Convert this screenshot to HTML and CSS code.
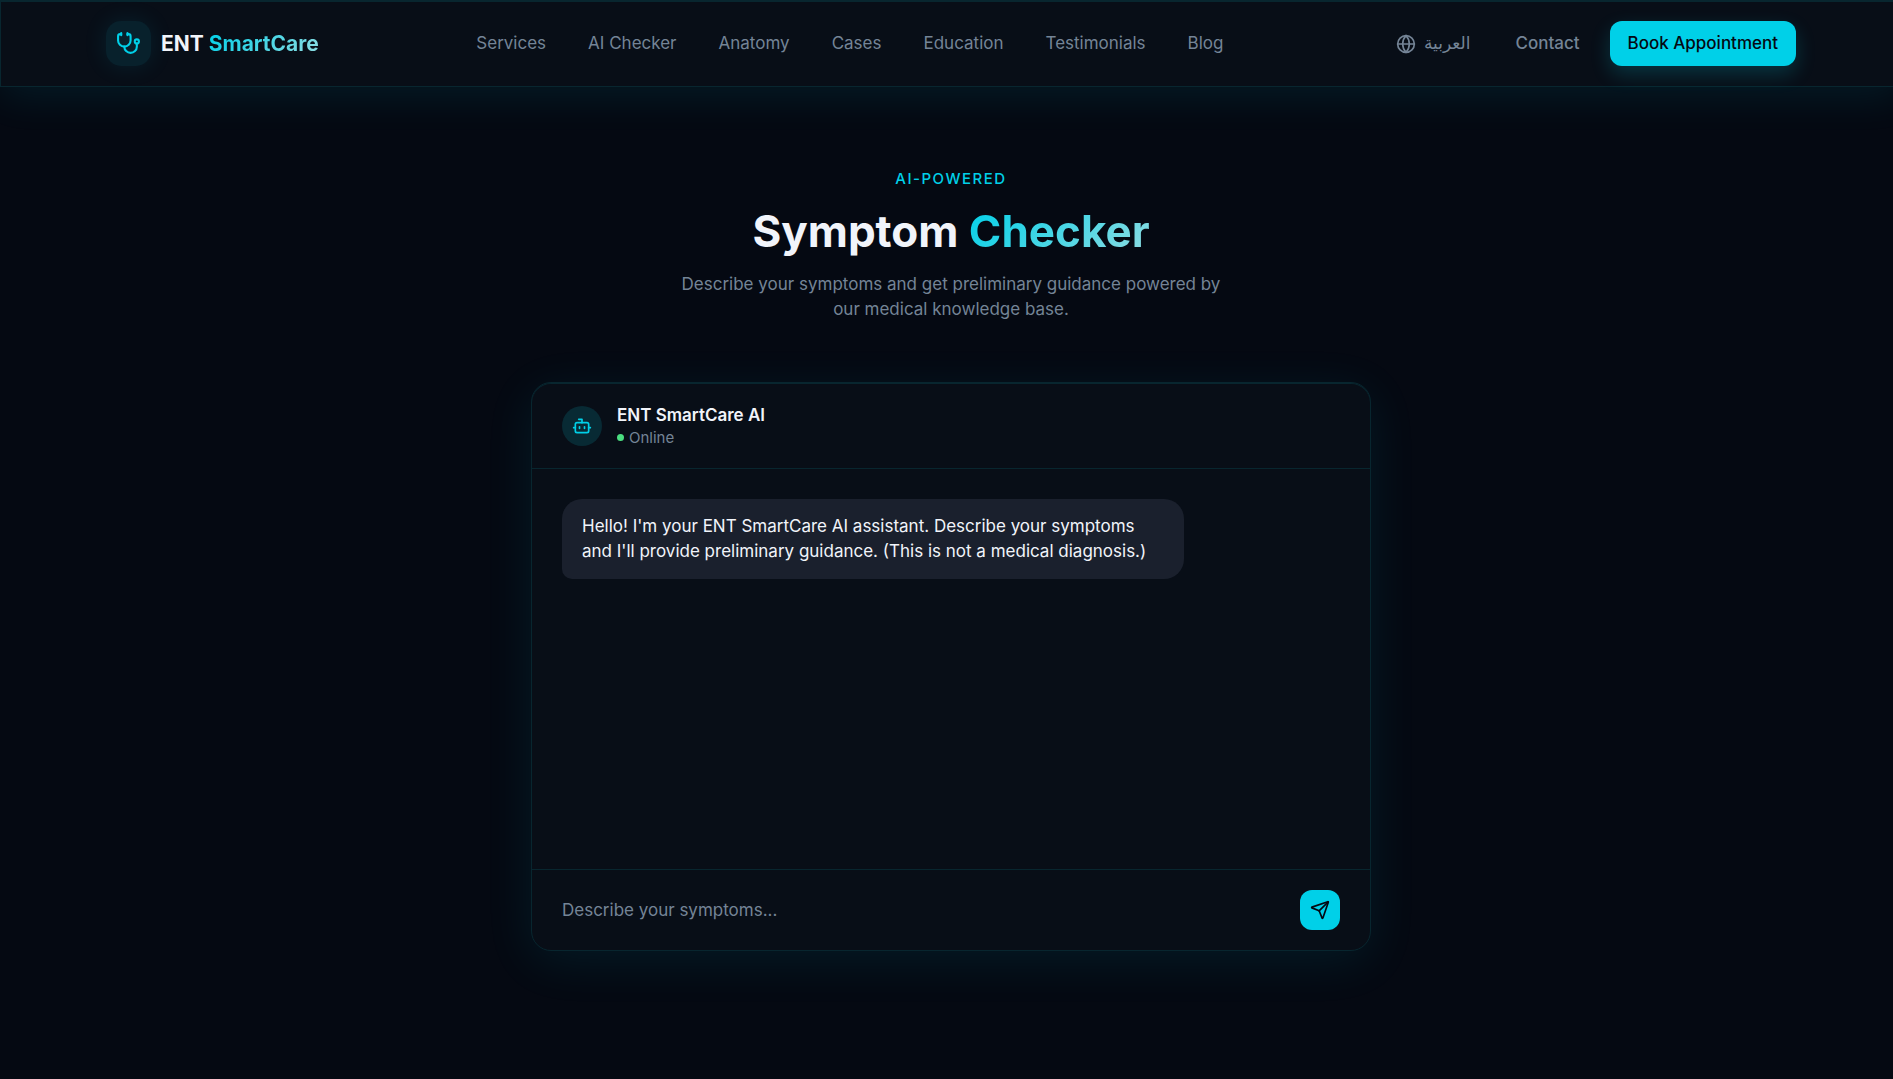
FILE: index.html
```html
<!DOCTYPE html>
<html lang="en">
<head>
<meta charset="utf-8">
<meta name="viewport" content="width=device-width, initial-scale=1">
<title>ENT SmartCare – Symptom Checker</title>
<link rel="stylesheet" href="styles.css">
</head>
<body>
<div class="page">
  <header class="site-header">
    <div class="container">
      <a class="brand" href="#">
        <span class="brand-mark">
          <svg class="icon-md" viewBox="0 0 24 24" aria-hidden="true"><path d="M11 2v2"/><path d="M5 2v2"/><path d="M5 3H4a2 2 0 0 0-2 2v4a6 6 0 0 0 12 0V5a2 2 0 0 0-2-2h-1"/><path d="M8 15a6 6 0 0 0 12 0v-3"/><circle cx="20" cy="10" r="2"/></svg>
        </span>
        <span class="brand-name">ENT <span class="gradient-text">SmartCare</span></span>
      </a>
      <nav class="main-nav" aria-label="Main">
        <a href="#services">Services</a>
        <a href="#checker">AI Checker</a>
        <a href="#anatomy">Anatomy</a>
        <a href="#cases">Cases</a>
        <a href="#education">Education</a>
        <a href="#testimonials">Testimonials</a>
        <a href="#blog">Blog</a>
      </nav>
      <div class="actions">
        <button class="ghost language" type="button">
          <svg class="icon-sm" viewBox="0 0 24 24" aria-hidden="true"><circle cx="12" cy="12" r="10"/><path d="M12 2a14.5 14.5 0 0 0 0 20 14.5 14.5 0 0 0 0-20"/><path d="M2 12h20"/></svg>
          <span class="arabic" lang="ar" dir="rtl">العربية</span>
        </button>
        <a class="ghost" href="#contact">Contact</a>
        <button class="primary" type="button">Book Appointment</button>
      </div>
    </div>
  </header>
  <main class="checker" id="checker">
    <p class="eyebrow">AI-POWERED</p>
    <h1>Symptom <span class="gradient-text">Checker</span></h1>
    <p class="lead">Describe your symptoms and get preliminary guidance powered by our medical knowledge base.</p>
    <section class="chat" aria-label="Symptom chat">
      <div class="chat-header">
        <span class="avatar">
          <svg class="icon-sm" viewBox="0 0 24 24" aria-hidden="true"><path d="M12 8V4H8"/><rect width="16" height="12" x="4" y="8" rx="2"/><path d="M2 14h2"/><path d="M20 14h2"/><path d="M15 13v2"/><path d="M9 13v2"/></svg>
        </span>
        <div>
          <h2>ENT SmartCare AI</h2>
          <p class="status">Online</p>
        </div>
      </div>
      <div class="messages">
        <p class="bubble">Hello! I'm your ENT SmartCare AI assistant. Describe your symptoms and I'll provide preliminary guidance. (This is not a medical diagnosis.)</p>
      </div>
      <form class="composer">
        <input type="text" aria-label="Describe your symptoms" placeholder="Describe your symptoms...">
        <button class="send" type="button" aria-label="Send">
          <svg class="icon-sm" viewBox="0 0 24 24" aria-hidden="true"><path d="M14.536 21.686a.5.5 0 0 0 .937-.024l6.5-19a.496.496 0 0 0-.635-.635l-19 6.5a.5.5 0 0 0-.024.937l7.93 3.18a2 2 0 0 1 1.112 1.11z"/><path d="m21.854 2.147-10.94 10.939"/></svg>
        </button>
      </form>
    </section>
  </main>
</div>
</body>
</html>
```
FILE: styles.css
```css
:root {
  --bg: #050912;
  --surface: #080e17;
  --line: #08262f;
  --cyan: #00d0e8;
  --muted: #748496;
  --text: #f1f4fa;
  --body: Inter, "Noto Sans", sans-serif;
}

* { box-sizing: border-box; }

body {
  margin: 0;
  overflow-x: hidden;
  background: var(--bg);
  color: var(--text);
  font: 400 17px/25px var(--body);
}

h1, h2, p { margin: 0; }
a { color: inherit; text-decoration: none; }
button, input { font: inherit; }
button { border: 0; cursor: pointer; }

svg {
  flex: none;
  fill: none;
  stroke: currentColor;
  stroke-width: 2;
  stroke-linecap: round;
  stroke-linejoin: round;
}
.icon-md { width: 25px; height: 25px; }
.icon-sm { width: 20px; height: 20px; }

/* The page runs slightly past the right edge of the window */
.page { width: calc(100% + 9px); min-height: 100vh; }

.gradient-text {
  background: linear-gradient(135deg, #00d0e8, #90dce2);
  background-clip: text;
  -webkit-background-clip: text;
  color: transparent;
}

.site-header {
  padding: 20px 0;
  border: 1px solid var(--line);
  background: var(--surface);
  box-shadow: 0 10px 40px rgba(0, 208, 232, 0.09), inset 0 1px 0 var(--line);
}

.container {
  display: flex;
  align-items: center;
  justify-content: space-between;
  max-width: 1750px;
  margin: 0 auto;
  padding: 0 30px;
}

.brand {
  display: flex;
  align-items: center;
  gap: 10px;
}

.brand-mark {
  display: grid;
  place-items: center;
  width: 45px;
  height: 45px;
  border-radius: 15px;
  background: #08212c;
  color: var(--cyan);
  box-shadow: 0 0 25px rgba(0, 208, 232, 0.1);
}

.brand-name { font-size: 21px; font-weight: 700; }

.main-nav {
  display: flex;
  gap: 42px;
  color: var(--muted);
}

.actions {
  display: flex;
  align-items: center;
  gap: 15px;
  font-weight: 500;
}

.ghost {
  display: flex;
  align-items: center;
  gap: 8px;
  padding: 10px 15px;
  background: none;
  color: var(--muted);
}

.arabic { font-family: "DejaVu Sans", sans-serif; }

.primary {
  height: 45px;
  padding: 0 18px;
  border-radius: 12px;
  background: var(--cyan);
  color: #050912;
  font-weight: 500;
  box-shadow: 0 8px 20px rgba(0, 208, 232, 0.2);
}

.checker {
  display: flex;
  flex-direction: column;
  align-items: center;
  padding: 79px 30px 127px;
}

.eyebrow {
  color: var(--cyan);
  font-size: 15px;
  font-weight: 500;
  letter-spacing: 0.1em;
}

h1 {
  margin-top: 15px;
  font-size: 44px;
  line-height: 50px;
}

.lead {
  max-width: 560px;
  margin: 16px 0 60px;
  color: var(--muted);
  text-align: center;
}

.chat {
  width: 100%;
  max-width: 840px;
  border: 1px solid var(--line);
  border-radius: 20px;
  background: var(--surface);
  box-shadow: 0 10px 50px rgba(0, 208, 232, 0.09), inset 0 1px 0 var(--line);
}

.chat-header {
  display: flex;
  align-items: center;
  gap: 15px;
  padding: 20px 30px;
  border-bottom: 1px solid var(--line);
}

.avatar {
  display: grid;
  place-items: center;
  width: 40px;
  height: 40px;
  border-radius: 50%;
  background: #082a34;
  color: var(--cyan);
}

h2 {
  font-size: 17px;
  font-weight: 600;
  line-height: 24px;
}

.status {
  display: flex;
  align-items: center;
  gap: 5px;
  color: var(--muted);
  font-size: 15px;
  line-height: 21px;
}

.status::before {
  width: 7px;
  height: 7px;
  border-radius: 50%;
  background: #4ade80;
  content: "";
}

.messages { min-height: 400px; padding: 30px; }

.bubble {
  width: fit-content;
  max-width: 80%;
  padding: 15px 20px;
  border-radius: 20px 20px 20px 10px;
  background: #1a202d;
}

.composer {
  display: flex;
  align-items: center;
  gap: 15px;
  padding: 20px 30px;
  border-top: 1px solid var(--line);
}

.composer input {
  flex: 1;
  min-width: 0;
  padding: 0;
  border: 0;
  outline: 0;
  background: none;
  color: var(--text);
}
.composer input::placeholder { color: var(--muted); opacity: 1; }

.send {
  display: grid;
  place-items: center;
  width: 40px;
  height: 40px;
  padding: 0;
  border-radius: 12px;
  background: var(--cyan);
  color: #050912;
}

@media (max-width: 1400px) {
  .container { flex-wrap: wrap; gap: 15px; }
  .main-nav { flex-wrap: wrap; gap: 10px 25px; }
}
```
